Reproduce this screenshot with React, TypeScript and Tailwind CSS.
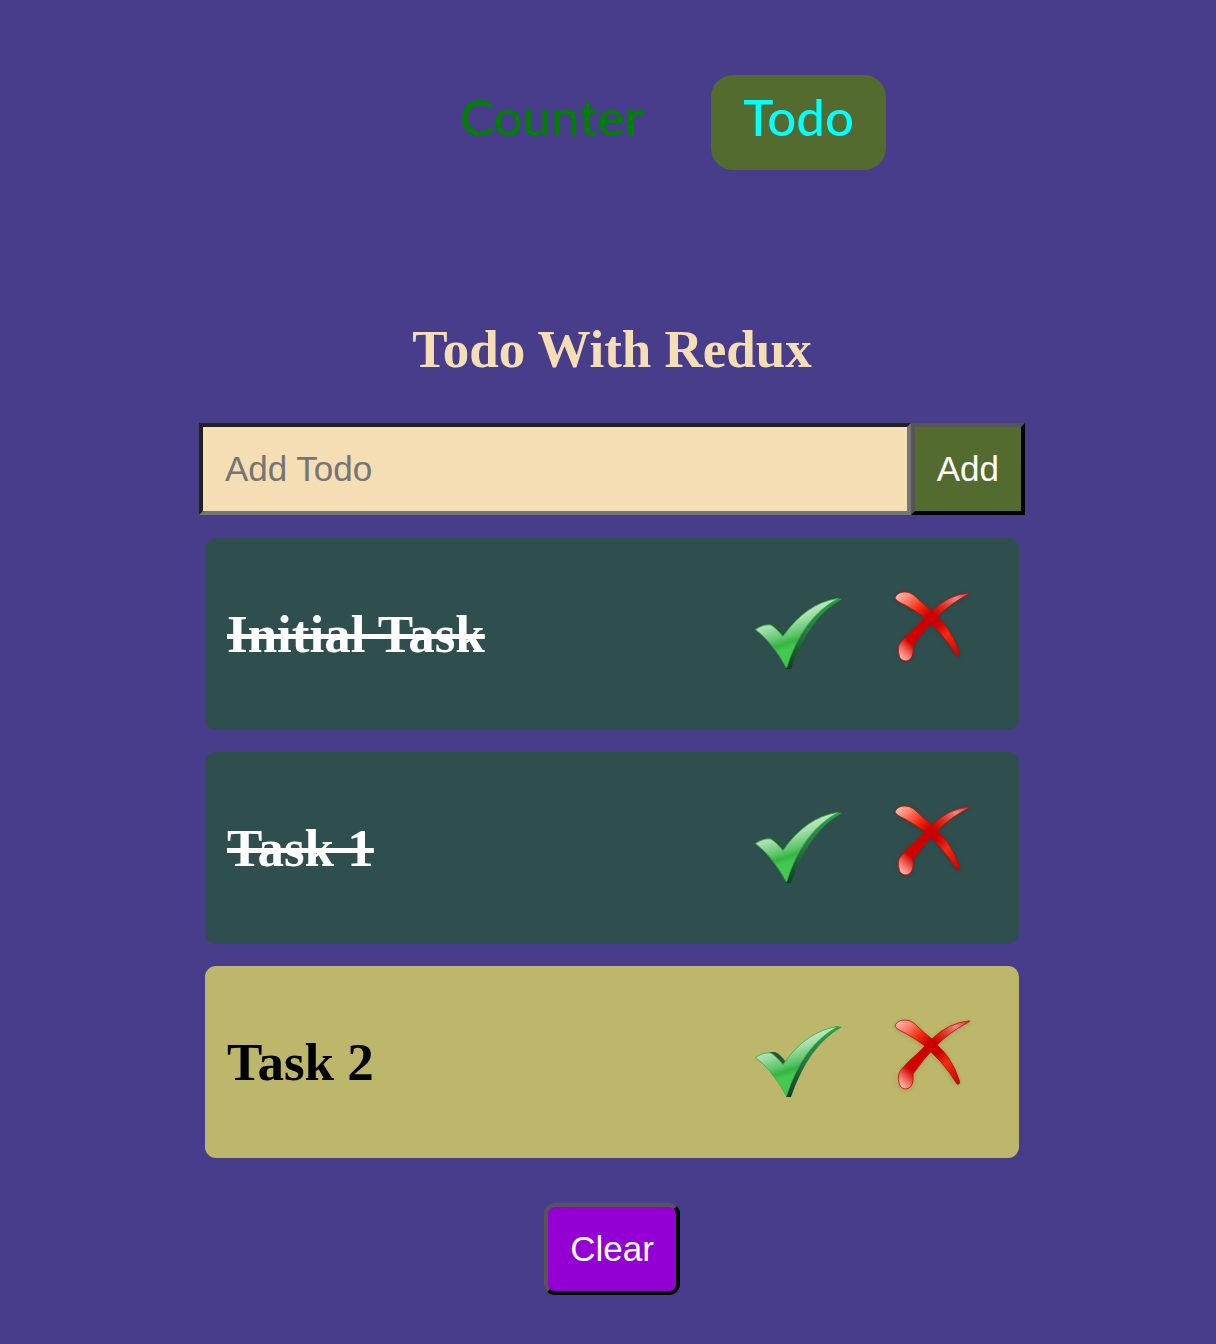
import { useId, useState } from "react";

type Todo = { id: number; text: string; done: boolean };

function CheckIcon() {
  const id = useId();
  return (
    <svg viewBox="0 0 88 74" className="h-[74px] w-[88px]" aria-hidden="true">
      <defs>
        <linearGradient id={id + "face"} x1="30" y1="4" x2="44" y2="48" gradientUnits="userSpaceOnUse">
          <stop offset="0" stopColor="#dcf7df" />
          <stop offset="0.45" stopColor="#a5dfab" />
          <stop offset="0.75" stopColor="#5cc568" />
          <stop offset="0.88" stopColor="#34b542" />
          <stop offset="1" stopColor="#43c951" />
        </linearGradient>
        <linearGradient id={id + "side"} x1="0.8" y1="0" x2="0" y2="1">
          <stop offset="0" stopColor="#23a044" />
          <stop offset="0.5" stopColor="#2a7c45" />
          <stop offset="1" stopColor="#0f3d22" />
        </linearGradient>
      </defs>
      <path d="M14 27L20 27Q24 28 31 37L28 40Z" fill="#235a35" />
      <path d="M81 1L87 2Q54 20 36 72L31 72Q46 24 81 1Z" fill={`url(#${id}side)`} />
      <path
        d="M0.5 32.5Q8 27 16 28Q21 31 28 39.5Q51 6 83 1.5Q47 21 31.5 71Q18 46 0.5 32.5Z"
        fill={`url(#${id}face)`}
        stroke="#33a848"
        strokeWidth="0.8"
      />
    </svg>
  );
}

function CrossIcon() {
  const id = useId();
  return (
    <svg viewBox="0 0 80 74" className="h-[74px] w-[80px] drop-shadow-sm" aria-hidden="true">
      <defs>
        <linearGradient id={id + "a"} x1="0" y1="0" x2="65" y2="65" gradientUnits="userSpaceOnUse">
          <stop offset="0.03" stopColor="#ffc2b8" />
          <stop offset="0.18" stopColor="#fb7a66" />
          <stop offset="0.32" stopColor="#f52b12" />
          <stop offset="0.45" stopColor="#cc0000" />
          <stop offset="0.6" stopColor="#cc0000" />
          <stop offset="0.74" stopColor="#f52b12" />
          <stop offset="1" stopColor="#c80000" />
        </linearGradient>
        <linearGradient id={id + "b"} x1="74" y1="0" x2="8" y2="70" gradientUnits="userSpaceOnUse">
          <stop offset="0" stopColor="#d03030" />
          <stop offset="0.14" stopColor="#ee8580" />
          <stop offset="0.3" stopColor="#dd2a1c" />
          <stop offset="0.42" stopColor="#cc0000" />
          <stop offset="0.8" stopColor="#d20300" />
          <stop offset="0.9" stopColor="#ee6a5c" />
          <stop offset="1" stopColor="#ffc2b8" />
        </linearGradient>
      </defs>
      <path
        d="M1 7Q2 3 8 1.2Q16 0 22 6Q29 13 38 20L43 26Q50 32 54 38Q62 50 65.5 62Q66 66 63 65Q55 52 46 42L37 33L31 27Q22 20 11 14Q2 10 1 7Z"
        fill={`url(#${id}a)`}
        stroke="#b80c05"
        strokeWidth="0.8"
      />
      <path
        d="M75.5 1.8Q76 3 72 4.5Q56 13 43 26Q30 39 19 55Q20 66 15 69Q10 71.5 6 67Q3 60 5 54Q9 47 23 35L38 20Q54 4 75.5 1.8Z"
        fill={`url(#${id}b)`}
        stroke="#b80c05"
        strokeWidth="0.8"
      />
      <path d="M31 27L38 20L43 26L37 33Z" fill="#cc0000" />
    </svg>
  );
}

export default function App() {
  const [text, setText] = useState("");
  const [todos, setTodos] = useState<Todo[]>([
    { id: 1, text: "Initial Task", done: true },
    { id: 2, text: "Task 1", done: true },
    { id: 3, text: "Task 2", done: false },
  ]);

  const add = () => {
    if (!text.trim()) return;
    setTodos([...todos, { id: Date.now(), text, done: false }]);
    setText("");
  };

  return (
    <div className="min-h-screen bg-[#483d8b] pt-[75px] pb-12 pl-2">
      <nav className="flex justify-center gap-9 pl-[90px] font-['Lato',sans-serif] text-[51px] leading-[60px] font-medium">
        <a href="#counter" className="px-8 pt-3 pb-[23px] text-[#008000]">
          Counter
        </a>
        <a href="#todo" className="rounded-[22px] bg-[#546b2f] px-8 pt-3 pb-[23px] text-[#00ffff]">
          Todo
        </a>
      </nav>

      <main className="mx-auto mt-[149px] w-[70%] max-w-[826px]">
        <h1 className="text-center font-['Liberation_Serif',serif] text-[53px] leading-[60px] font-bold text-[#f5deb3]">
          Todo With Redux
        </h1>

        <form
          className="mt-11 flex h-[92px] font-['Liberation_Sans',sans-serif] text-[35px]"
          onSubmit={(e) => {
            e.preventDefault();
            add();
          }}
        >
          <input
            aria-label="Add Todo"
            placeholder="Add Todo"
            value={text}
            onChange={(e) => setText(e.target.value)}
            className="min-w-0 flex-1 border-4 border-t-[#212121] border-r-[#757575] border-b-[#757575] border-l-[#212121] bg-[#f5deb3] px-[22px] text-black placeholder:text-[#757575]"
          />
          <button
            type="submit"
            className="border-4 border-t-[#555555] border-r-black border-b-black border-l-[#555555] bg-[#546b2f] px-[22px] text-white"
          >
            Add
          </button>
        </form>

        <ul className="mx-1.5 mt-[23px] flex flex-col gap-[22px]">
          {todos.map((todo) => (
            <li
              key={todo.id}
              className={`flex h-48 items-center justify-between rounded-[11px] pr-[45px] pl-[22px] ${
                todo.done ? "bg-[#2f4f4f]" : "bg-[#bdb76b]"
              }`}
            >
              <h2
                className={`font-['Liberation_Serif',serif] text-[53px] leading-[60px] font-bold ${
                  todo.done ? "text-white line-through" : "text-black"
                }`}
              >
                {todo.text}
              </h2>
              <div className="flex items-start gap-[51px] pb-1.5">
                <button
                  type="button"
                  aria-label={`Complete ${todo.text}`}
                  className="pt-1.5"
                  onClick={() => setTodos(todos.map((t) => (t.id === todo.id ? { ...t, done: !t.done } : t)))}
                >
                  <CheckIcon />
                </button>
                <button
                  type="button"
                  aria-label={`Delete ${todo.text}`}
                  onClick={() => setTodos(todos.filter((t) => t.id !== todo.id))}
                >
                  <CrossIcon />
                </button>
              </div>
            </li>
          ))}
        </ul>

        <div className="mt-[45px] flex justify-center">
          <button
            type="button"
            onClick={() => setTodos([])}
            className="h-[92px] rounded-[11px] border-4 border-t-[#555555] border-r-black border-b-black border-l-[#555555] bg-[#9400d3] px-[22px] font-['Liberation_Sans',sans-serif] text-[35px] text-white"
          >
            Clear
          </button>
        </div>
      </main>
    </div>
  );
}
